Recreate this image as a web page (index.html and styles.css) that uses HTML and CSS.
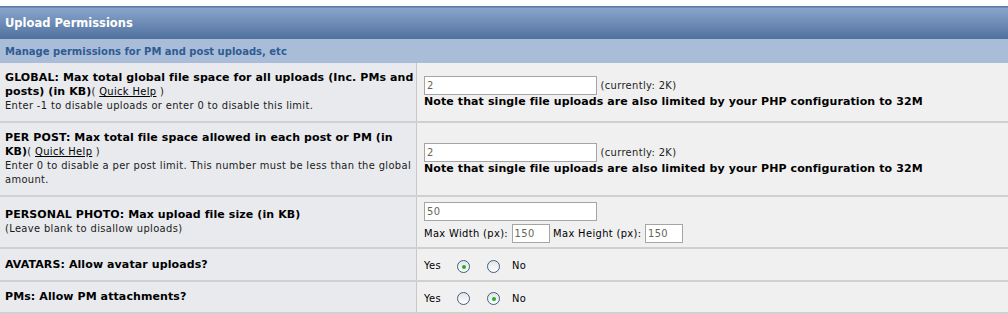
FILE: index.html
```html
<!DOCTYPE html>
<html>
<head>
<meta charset="utf-8">
<link rel="stylesheet" href="styles.css">
</head>
<body>
<table class="panel">
  <tr><th colspan="2" class="title">Upload Permissions</th></tr>
  <tr><td colspan="2" class="subtitle">Manage permissions for PM and post uploads, etc</td></tr>
  <tr class="row r1">
    <td class="label"><b>GLOBAL: Max total global file space for all uploads (Inc. PMs and posts) (in KB)</b>( <a href="#">Quick Help</a> )<br>Enter -1 to disable uploads or enter 0 to disable this limit.</td>
    <td class="field"><input class="txt" type="text" value="2"> <span class="cur">(currently: 2K)</span><br><b>Note that single file uploads are also limited by your PHP configuration to 32M</b></td>
  </tr>
  <tr class="row r2">
    <td class="label"><b>PER POST: Max total file space allowed in each post or PM (in KB)</b>( <a href="#">Quick Help</a> )<br>Enter 0 to disable a per post limit. This number must be less than the global amount.</td>
    <td class="field"><input class="txt" type="text" value="2"> <span class="cur">(currently: 2K)</span><br><b>Note that single file uploads are also limited by your PHP configuration to 32M</b></td>
  </tr>
  <tr class="row r3">
    <td class="label"><b>PERSONAL PHOTO: Max upload file size (in KB)</b><br>(Leave blank to disallow uploads)</td>
    <td class="field"><input class="txt" type="text" value="50"><div class="dims">Max Width (px): <input class="sm" type="text" value="150"> Max Height (px): <input class="sm" type="text" value="150"></div></td>
  </tr>
  <tr class="row r4">
    <td class="label"><b>AVATARS: Allow avatar uploads?</b></td>
    <td class="field"><span class="yn">Yes <span class="radio on"></span><span class="radio"></span> No</span></td>
  </tr>
  <tr class="row r5">
    <td class="label"><b>PMs: Allow PM attachments?</b></td>
    <td class="field"><span class="yn">Yes <span class="radio"></span><span class="radio on"></span> No</span></td>
  </tr>
</table>
</body>
</html>
```

FILE: styles.css
```css
html, body { margin: 0; padding: 0; background: #fff; }
body { padding-top: 6px; font-family: "DejaVu Sans Condensed", "DejaVu Sans", sans-serif; font-size: 11px; letter-spacing: 0.36px; color: #000; }
b { font-family: "DejaVu Sans", sans-serif; font-weight: bold; letter-spacing: 0.1px; }
.panel { width: 1020px; border-collapse: collapse; border-spacing: 0; }
.title {
  text-align: left; height: 32px; padding: 0 5px; color: #fff;
  font-family: "DejaVu Sans", sans-serif; font-size: 11.5px; font-weight: bold; letter-spacing: 0;
  border-top: 1px solid #5c7ba6;
  background: linear-gradient(#8aa6cc, #4f6f9d);
}
.subtitle {
  height: 24px; padding: 0 5px; background: #a9bdd8; color: #2f5b93;
  font-family: "DejaVu Sans", sans-serif; font-size: 10px; font-weight: bold; letter-spacing: 0;
}
.row td { border-bottom: 2px solid #d0d0d0; vertical-align: middle; line-height: 14px; }
.label { width: 409px; padding: 0 2px 0 5px; background: #e8eaed; border-right: 1px solid #c8c8c8; color: #1a1a1a; }
.label b { color: #000; }
.label a { color: #000; }
.field { padding: 0 7px; background: #f0f0f0; }
.r1 td { height: 58px; }
.r2 td { height: 72px; }
.r3 td { height: 50px; }
.r4 td { height: 31px; }
.r5 td { height: 30px; }
.txt { width: 167px; height: 17px; box-sizing: content-box; padding: 0 2px; margin: 0; border: 1px solid #a5a5a5; font: 11px "DejaVu Sans Condensed", sans-serif; letter-spacing: 0.36px; color: #665; vertical-align: middle; background: #fff; }
.sm { width: 32px; height: 17px; padding: 0 2px; margin: 0; border: 1px solid #a5a5a5; font: 11px "DejaVu Sans Condensed", sans-serif; letter-spacing: 0.36px; color: #665; vertical-align: middle; background: #fff; }
.dims { margin-top: 3px; }
.cur { color: #222; }
.yn { display: inline-flex; align-items: center; padding-top: 3px; }
.radio { width: 11px; height: 11px; border: 1px solid #3c5f84; border-radius: 50%; background: linear-gradient(#e4e4e4, #fff); position: relative; display: inline-block; }
.radio:first-of-type { margin-left: 16px; }
.radio + .radio { margin-left: 17px; margin-right: 12px; }
.radio.on::after { content: ""; position: absolute; left: 4px; top: 4px; width: 4px; height: 4px; border-radius: 50%; background: #22b022; }
```
